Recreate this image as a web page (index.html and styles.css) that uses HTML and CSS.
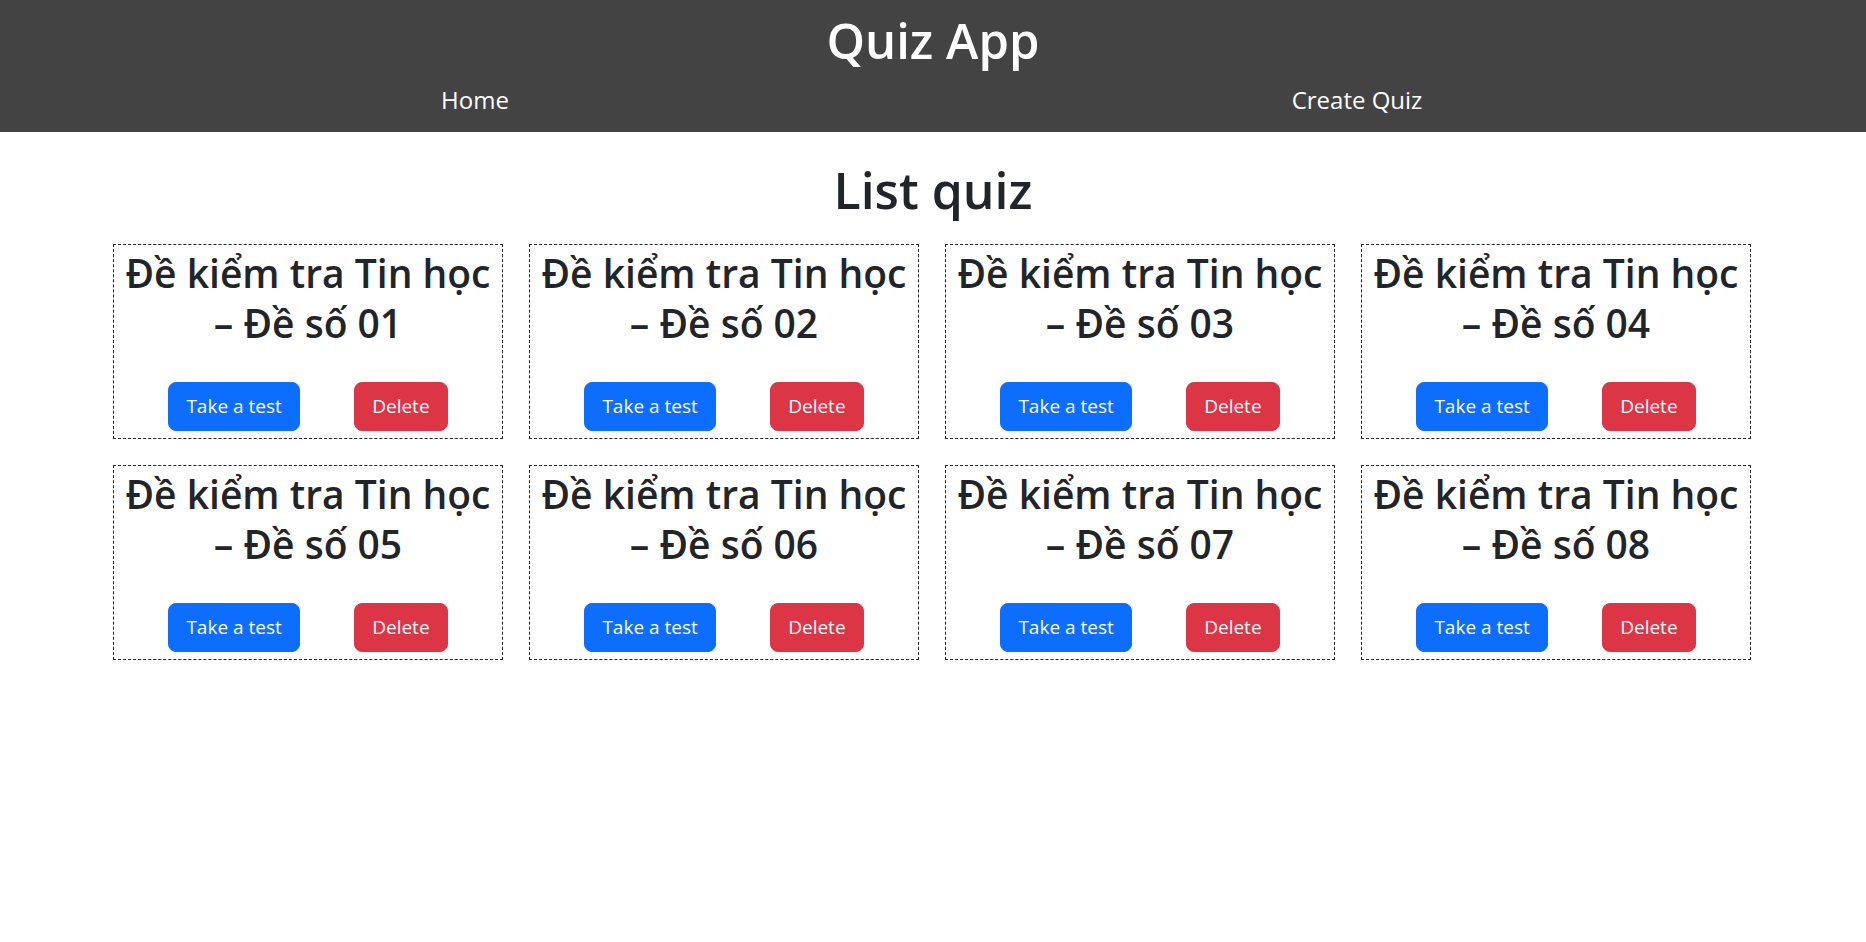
FILE: index.html
```html
<!DOCTYPE html>
<html lang="vi">
<head>
<meta charset="utf-8">
<title>Quiz App</title>
<link rel="stylesheet" href="styles.css">
</head>
<body>
<header class="site-header">
  <h1 class="brand">Quiz App</h1>
  <nav class="nav">
    <a class="nav-link" href="#">Home</a>
    <a class="nav-link" href="#">Create Quiz</a>
  </nav>
</header>
<main class="main">
  <h2 class="page-title">List quiz</h2>
  <div class="quiz-grid">
    <div class="quiz-card"><h3 class="quiz-title">Đề kiểm tra Tin học – Đề số 01</h3><div class="actions"><button class="btn btn-primary">Take a test</button><button class="btn btn-danger">Delete</button></div></div>
    <div class="quiz-card"><h3 class="quiz-title">Đề kiểm tra Tin học – Đề số 02</h3><div class="actions"><button class="btn btn-primary">Take a test</button><button class="btn btn-danger">Delete</button></div></div>
    <div class="quiz-card"><h3 class="quiz-title">Đề kiểm tra Tin học – Đề số 03</h3><div class="actions"><button class="btn btn-primary">Take a test</button><button class="btn btn-danger">Delete</button></div></div>
    <div class="quiz-card"><h3 class="quiz-title">Đề kiểm tra Tin học – Đề số 04</h3><div class="actions"><button class="btn btn-primary">Take a test</button><button class="btn btn-danger">Delete</button></div></div>
    <div class="quiz-card"><h3 class="quiz-title">Đề kiểm tra Tin học – Đề số 05</h3><div class="actions"><button class="btn btn-primary">Take a test</button><button class="btn btn-danger">Delete</button></div></div>
    <div class="quiz-card"><h3 class="quiz-title">Đề kiểm tra Tin học – Đề số 06</h3><div class="actions"><button class="btn btn-primary">Take a test</button><button class="btn btn-danger">Delete</button></div></div>
    <div class="quiz-card"><h3 class="quiz-title">Đề kiểm tra Tin học – Đề số 07</h3><div class="actions"><button class="btn btn-primary">Take a test</button><button class="btn btn-danger">Delete</button></div></div>
    <div class="quiz-card"><h3 class="quiz-title">Đề kiểm tra Tin học – Đề số 08</h3><div class="actions"><button class="btn btn-primary">Take a test</button><button class="btn btn-danger">Delete</button></div></div>
  </div>
</main>
</body>
</html>
```

FILE: styles.css
```css
* { box-sizing: border-box; }
body { margin: 0; font-family: "Open Sans", sans-serif; color: #212529; background: #fff; }
.site-header { background: #434343; color: #fff; height: 132px; padding-top: 11px; }
.brand { margin: 0; text-align: center; font-size: 49px; font-weight: 600; line-height: 58px; }
.nav { display: flex; margin-top: 13px; padding: 0 68px 0 34px; }
.nav-link { flex: 1; text-align: center; color: #fff; text-decoration: none; font-size: 24px; line-height: 36px; }
.page-title { margin: 28px 0 24px; text-align: center; font-size: 50px; font-weight: 600; line-height: 60px; }
.quiz-grid { display: grid; grid-template-columns: repeat(4, 390px); gap: 26px 26px; margin-left: 113px; }
.quiz-card { border: 1px dashed #222; height: 195px; padding-top: 3px; text-align: center; display: flex; flex-direction: column; }
.quiz-title { margin: 0; font-size: 39px; font-weight: 600; line-height: 50px; }
.actions { margin-top: auto; margin-bottom: 7px; display: flex; justify-content: space-evenly; }
.btn { font-family: inherit; font-size: 19px; line-height: 29px; padding: 9px 17px; border: 1px solid transparent; border-radius: 8px; color: #fff; cursor: pointer; }
.btn-primary { background: #0d6efd; border-color: #0d6efd; }
.btn-danger { background: #dc3545; border-color: #dc3545; }
```
